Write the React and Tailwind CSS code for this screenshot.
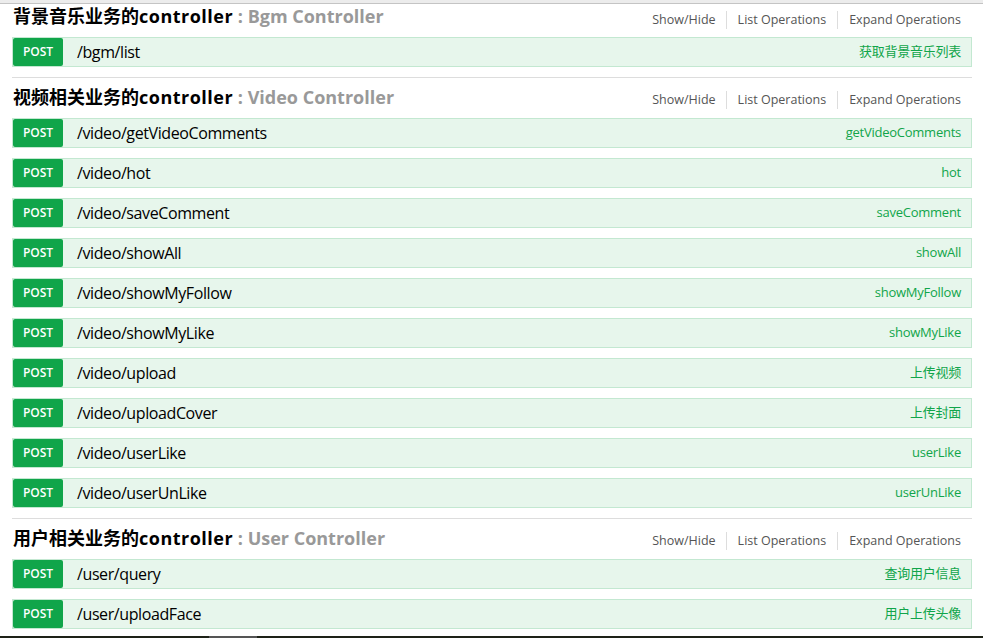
import React from 'react';

const FONT = { fontFamily: '"Open Sans", "Noto Sans CJK SC", sans-serif' };

const sections = [
  {
    title: '背景音乐业务的',
    sub: 'Bgm Controller',
    ops: [['/bgm/list', '获取背景音乐列表']],
  },
  {
    title: '视频相关业务的',
    sub: 'Video Controller',
    ops: [
      ['/video/getVideoComments', 'getVideoComments'],
      ['/video/hot', 'hot'],
      ['/video/saveComment', 'saveComment'],
      ['/video/showAll', 'showAll'],
      ['/video/showMyFollow', 'showMyFollow'],
      ['/video/showMyLike', 'showMyLike'],
      ['/video/upload', '上传视频'],
      ['/video/uploadCover', '上传封面'],
      ['/video/userLike', 'userLike'],
      ['/video/userUnLike', 'userUnLike'],
    ],
  },
  {
    title: '用户相关业务的',
    sub: 'User Controller',
    ops: [
      ['/user/query', '查询用户信息'],
      ['/user/uploadFace', '用户上传头像'],
    ],
  },
];

const Heading = ({ title, sub, first }) => (
  <div className={`flex justify-between ${first ? 'h-[33px]' : 'h-[40px]'}`}>
    <h2 className={`pl-[1px] text-[18px] leading-[24px] font-bold text-black whitespace-nowrap ${first ? 'pt-0' : 'pt-[7px]'}`}>
      {title}
      <span className="tracking-[0.5px]">controller</span>
      <span className="text-[#999999]"> : {sub}</span>
    </h2>
    <ul className={`flex items-center pr-[11px] text-[12.5px] leading-[18px] text-[#555555] h-fit ${first ? 'pt-[7px]' : 'pt-[13px]'}`}>
      <li className="pr-[10px] border-r border-[#dddddd]">Show/Hide</li>
      <li className="px-[11px] border-r border-[#dddddd]">List Operations</li>
      <li className="pl-[11px]">Expand Operations</li>
    </ul>
  </div>
);

const Operation = ({ path, summary }) => (
  <div className="flex items-center h-[30px] mb-[10px] bg-[#e7f6ec] border border-[#c3e8d1]">
    <span className="flex items-center justify-center w-[50px] h-[28px] bg-[#10a54a] rounded-[2px] text-white text-[12px] font-semibold">
      POST
    </span>
    <span className="ml-[14px] text-[16px] tracking-[-0.4px] text-black">{path}</span>
    <span className="ml-auto pr-[10px] text-[13px] tracking-[-0.25px] text-[#10a54a]">{summary}</span>
  </div>
);

export default function App() {
  return (
    <div className="w-[983px] h-[638px] overflow-hidden bg-white flex flex-col" style={FONT}>
      <div className="h-[4px] shrink-0 bg-[#ececec] border-b border-[#c4c4c4]" />
      <div className="flex-1 overflow-hidden pl-[12px] pr-[11px]">
        {sections.map((s, i) => (
          <div key={s.sub} className="border-b border-[#dddddd]">
            <Heading title={s.title} sub={s.sub} first={i === 0} />
            {s.ops.map(([p, t]) => (
              <Operation key={p} path={p} summary={t} />
            ))}
          </div>
        ))}
      </div>
      <div className="h-[2px] shrink-0 flex bg-[#1e2218]">
        <div className="ml-[209px] w-[48px] bg-[#555555]" />
      </div>
    </div>
  );
}
